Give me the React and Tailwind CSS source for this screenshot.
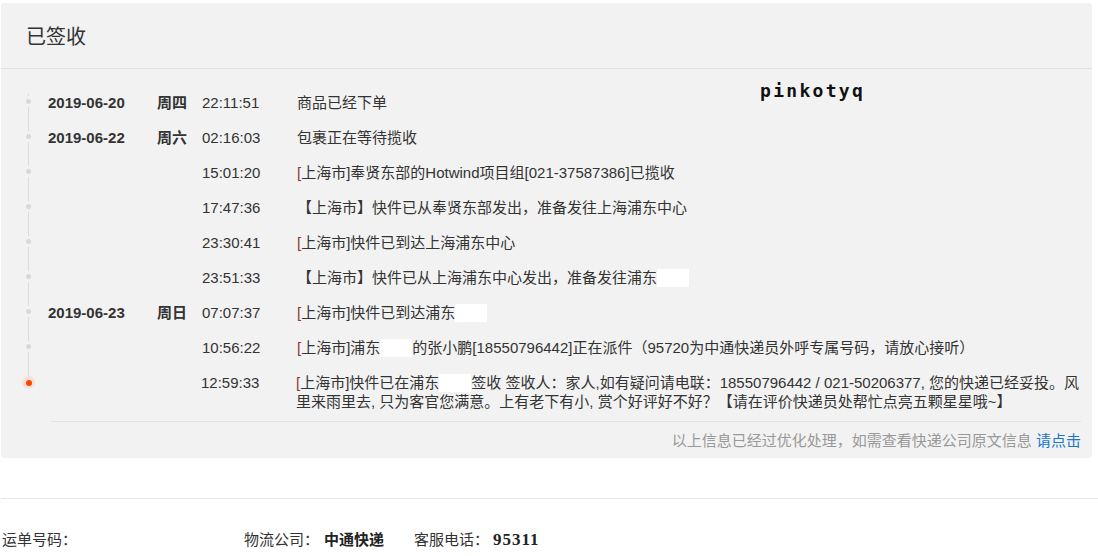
import React from "react";

const Box = () => (
  <span className="inline-block w-[32px] h-[18px] bg-white align-[-4px]" />
);
const LB = () => <span className="text-[#8a3b2c]">[</span>;

const rows = [
  { date: "2019-06-20", wd: "周四", time: "22:11:51", text: <>商品已经下单</> },
  { date: "2019-06-22", wd: "周六", time: "02:16:03", text: <>包裹正在等待揽收</> },
  {
    time: "15:01:20",
    text: (
      <>
        <LB />上海市]奉贤东部的Hotwind项目组[021-37587386]已揽收
      </>
    ),
  },
  { time: "17:47:36", text: <>【上海市】快件已从奉贤东部发出，准备发往上海浦东中心</> },
  {
    time: "23:30:41",
    text: (
      <>
        <LB />上海市]快件已到达上海浦东中心
      </>
    ),
  },
  {
    time: "23:51:33",
    text: (
      <>
        【上海市】快件已从上海浦东中心发出，准备发往浦东
        <Box />
      </>
    ),
  },
  {
    date: "2019-06-23",
    wd: "周日",
    time: "07:07:37",
    text: (
      <>
        <LB />上海市]快件已到达浦东
        <Box />
      </>
    ),
  },
  {
    time: "10:56:22",
    text: (
      <>
        <LB />上海市]浦东
        <Box />
        的张小鹏[18550796442]正在派件（95720为中通快递员外呼专属号码，请放心接听）
      </>
    ),
  },
];

export default function App() {
  return (
    <div
      className="bg-white w-[1098px] h-[556px] overflow-hidden text-[#333]"
      style={{ fontFamily: '"Liberation Sans", "Noto Sans CJK SC", sans-serif' }}
    >
      <div className="relative mt-[3px] ml-[1px] w-[1091px] bg-[#f2f2f2] rounded-[3px]">
        <div className="h-[66px] flex items-center pl-[25px] pt-[3px] text-[20px] border-b border-[#e2e2e2]">
          已签收
        </div>

        <div className="absolute left-[759px] top-[74px] text-[18px] font-bold tracking-[2.3px] text-[#111]"
          style={{ fontFamily: '"DejaVu Sans Mono", monospace' }}>
          pinkotyq
        </div>

        <div className="relative pt-[16px] text-[15px]">
          <div className="absolute left-[27px] top-[25px] h-[287px] w-px bg-[#dcdcdc]" />
          {rows.map((r, i) => (
            <div key={i} className="relative flex pl-[47px] py-[8px] leading-[19px]">
              <span className="absolute left-[25px] top-[14px] w-[5px] h-[5px] rounded-full bg-[#d9d9d9] shadow-[0_0_0_3px_#f2f2f2]" />
              <div className="w-[109px] shrink-0 font-bold">{r.date || ""}</div>
              <div className="w-[45px] shrink-0 font-bold">{r.wd || ""}</div>
              <div className="w-[95px] shrink-0">{r.time}</div>
              <div className="whitespace-nowrap">{r.text}</div>
            </div>
          ))}
          <div className="relative flex pl-[46px] py-[8px] leading-[19px]">
            <span className="absolute left-[21px] top-[11px] w-[13px] h-[13px] rounded-full bg-[#f9e0d8] flex items-center justify-center">
              <span className="w-[6px] h-[6px] rounded-full bg-[#ff4400]" />
            </span>
            <div className="w-[109px] shrink-0" />
            <div className="w-[45px] shrink-0" />
            <div className="w-[95px] shrink-0">12:59:33</div>
            <div className="whitespace-nowrap">
              <LB />上海市]快件已在浦东
              <Box />
              签收 签收人：家人,如有疑问请电联：18550796442 / 021-50206377, 您的快递已经妥投。风
              <br />
              里来雨里去, 只为客官您满意。上有老下有小, 赏个好评好不好？【请在评价快递员处帮忙点亮五颗星星哦~】
            </div>
          </div>
        </div>

        <div className="ml-[50px] mr-[11px] mt-[2px] border-t border-[#e3e3e3]" />
        <div className="pt-[9px] pb-[8px] pr-[11px] text-right text-[15px] leading-[19px] text-[#999]">
          以上信息已经过优化处理，如需查看快递公司原文信息 <span className="text-[#1b76c8]">请点击</span>
        </div>
      </div>

      <div className="mt-[40px] ml-[1px] border-t border-[#e6e6e6]" />

      <div className="flex pl-[2px] mt-[31px] text-[15px] leading-[19px] text-[#333]">
        <span className="w-[242px] shrink-0">运单号码：</span>
        <span>物流公司：</span>
        <span className="ml-[5px] font-bold text-[#222]">中通快递</span>
        <span className="ml-[30px]">客服电话：</span>
        <span
          className="ml-[4px] font-bold text-[17px] tracking-[1px] text-[#222]"
          style={{ fontFamily: '"Liberation Serif", serif' }}
        >
          95311
        </span>
      </div>
    </div>
  );
}
